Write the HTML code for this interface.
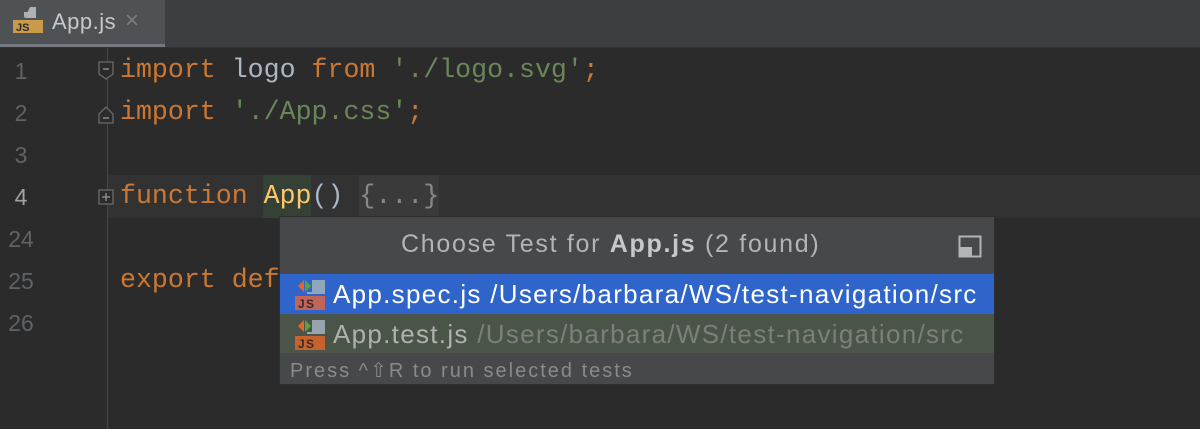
<!DOCTYPE html>
<html><head><style>
body{margin:0;width:1200px;height:429px;background:#2b2b2b;overflow:hidden;position:relative;font-family:"Liberation Sans",sans-serif}
.tabbar{position:absolute;left:0;top:0;width:1200px;height:47px;background:#3c3f41;border-bottom:1px solid #323232}
.tab{position:absolute;left:0;top:0;width:165px;height:44px;background:#4e5254;border-bottom:3px solid #747a80}
.tab span{position:absolute;left:52px;top:9px;font-size:22px;color:#c8c8c8;letter-spacing:0.5px}
.tab .x{left:125px;top:7px;font-size:24px;color:#7b7e80}
.gut{position:absolute;left:107px;top:48px;width:1px;height:381px;background:#474747}
.ln{position:absolute;left:0;width:42px;text-align:center;font-family:"Liberation Sans",sans-serif;font-size:23px;color:#606366}
.code{position:absolute;left:120px;font-family:"Liberation Mono",monospace;font-size:26.6px;white-space:pre;color:#a9b7c6}
.k{color:#cc7832}.s{color:#6a8759}
.hl{position:absolute;left:108px;top:175px;width:1092px;height:43px;background:#323232}
.pop{position:absolute;left:279px;top:216px;width:716px;height:169px;background:#46484a;border:1px solid #2e2e2e;box-sizing:border-box}
.title{position:absolute;left:121px;top:13px;white-space:nowrap;font-size:25px;letter-spacing:1.7px;color:#b4b4b4}
.row{position:absolute;left:0;width:714px;height:40px;font-size:26px;letter-spacing:1.3px}
.row .t{position:absolute;left:53px;top:5px;white-space:nowrap}
.foot{position:absolute;left:10px;top:141px;font-size:20px;letter-spacing:2px;color:#8a8a8a;white-space:nowrap}
.ic{position:absolute;left:15px;top:4px;width:30px;height:32px}
</style></head><body>
<div class="tabbar"><div class="tab">
<svg style="position:absolute;left:13px;top:6px" width="32" height="32"><path d="M17 1 L23 1 L23 12 L12 12 Z" fill="#aeb2b5"/><path d="M11 6 L17 6 L11 12Z" fill="#aeb2b5"/><rect x="0" y="14" width="30" height="13" fill="#c99a4c"/><text x="3" y="25" font-family="Liberation Sans" font-weight="bold" font-size="11" fill="#2b2b2b">JS</text></svg>
<span>App.js</span><span class="x">×</span></div></div>
<div class="hl"></div>
<div style="position:absolute;left:263px;top:175px;width:48px;height:43px;background:#344134"></div>
<div style="position:absolute;left:359px;top:175px;width:80px;height:43px;background:#3a3a3a"></div>
<div class="gut"></div>
<div class="ln" style="top:58px">1</div><div class="ln" style="top:100px">2</div><div class="ln" style="top:142px">3</div><div class="ln" style="top:184px;color:#a4a3a3">4</div><div class="ln" style="top:226px">24</div><div class="ln" style="top:268px">25</div><div class="ln" style="top:310px">26</div>
<svg style="position:absolute;left:97px;top:60px" width="20" height="170"><path d="M2 2H16V14L9 19L2 14Z" fill="#2b2b2b" stroke="#6a6a6a" stroke-width="1.3"/><path d="M6 9H12" stroke="#8a8a8a" stroke-width="1.5"/><path d="M2 54L9 47L16 54V63H2Z" fill="#2b2b2b" stroke="#6a6a6a" stroke-width="1.3"/><path d="M6 58H12" stroke="#8a8a8a" stroke-width="1.5"/><rect x="2" y="130" width="14" height="14" fill="#2b2b2b" stroke="#6a6a6a" stroke-width="1.3"/><path d="M5 137H13M9 133V141" stroke="#8a8a8a" stroke-width="1.5"/></svg>
<div class="code" style="top:55px"><span class="k">import</span> logo <span class="k">from</span> <span class="s">'./logo.svg'</span><span class="k">;</span></div>
<div class="code" style="top:97px"><span class="k">import</span> <span class="s">'./App.css'</span><span class="k">;</span></div>
<div class="code" style="top:181px"><span class="k">function</span> <span style="color:#ffc66d">App</span>() <span style="color:#888">{...}</span></div>
<div class="code" style="top:265px"><span class="k">export def</span></div>
<div class="pop">
<div class="title">Choose Test for <b style="color:#c8c8c8">App.js</b> (2 found)</div>
<svg style="position:absolute;left:678px;top:18px" width="26" height="24"><rect x="1.5" y="1.5" width="21" height="20" fill="none" stroke="#b4b4b4" stroke-width="2"/><rect x="1" y="12" width="13" height="10" fill="#b4b4b4"/></svg>
<div class="row" style="top:57px;background:#2f65ca;color:#fff">
<svg class="ic"><path d="M9 2L3 8L9 14Z" fill="#e8632b"/><path d="M10 2L16 8L10 14Z" fill="#56a43a"/><rect x="17" y="2" width="13" height="13" fill="#8fa6bb"/><path d="M12 15H30" stroke="#8fa6bb" stroke-width="2"/><rect x="0" y="18" width="30" height="14" fill="#c1645a"/><text x="3" y="30" font-family="Liberation Sans" font-weight="bold" font-size="12" fill="#3a2a28">JS</text></svg>
<span class="t">App.spec.js /Users/barbara/WS/test-navigation/src</span></div>
<div class="row" style="top:97px;background:#4b5448;color:#b0b0b0;height:39px">
<svg class="ic"><path d="M9 2L3 8L9 14Z" fill="#e8632b"/><path d="M10 2L16 8L10 14Z" fill="#56a43a"/><rect x="17" y="2" width="13" height="13" fill="#98a3ad"/><path d="M12 15H30" stroke="#98a3ad" stroke-width="2"/><rect x="0" y="18" width="30" height="14" fill="#c5622d"/><text x="3" y="30" font-family="Liberation Sans" font-weight="bold" font-size="12" fill="#3a2a28">JS</text></svg>
<span class="t">App.test.js <span style="color:#7d7f7c">/Users/barbara/WS/test-navigation/src</span></span></div>
<div class="foot">Press ^⇧R to run selected tests</div>
</div>
</body></html>
